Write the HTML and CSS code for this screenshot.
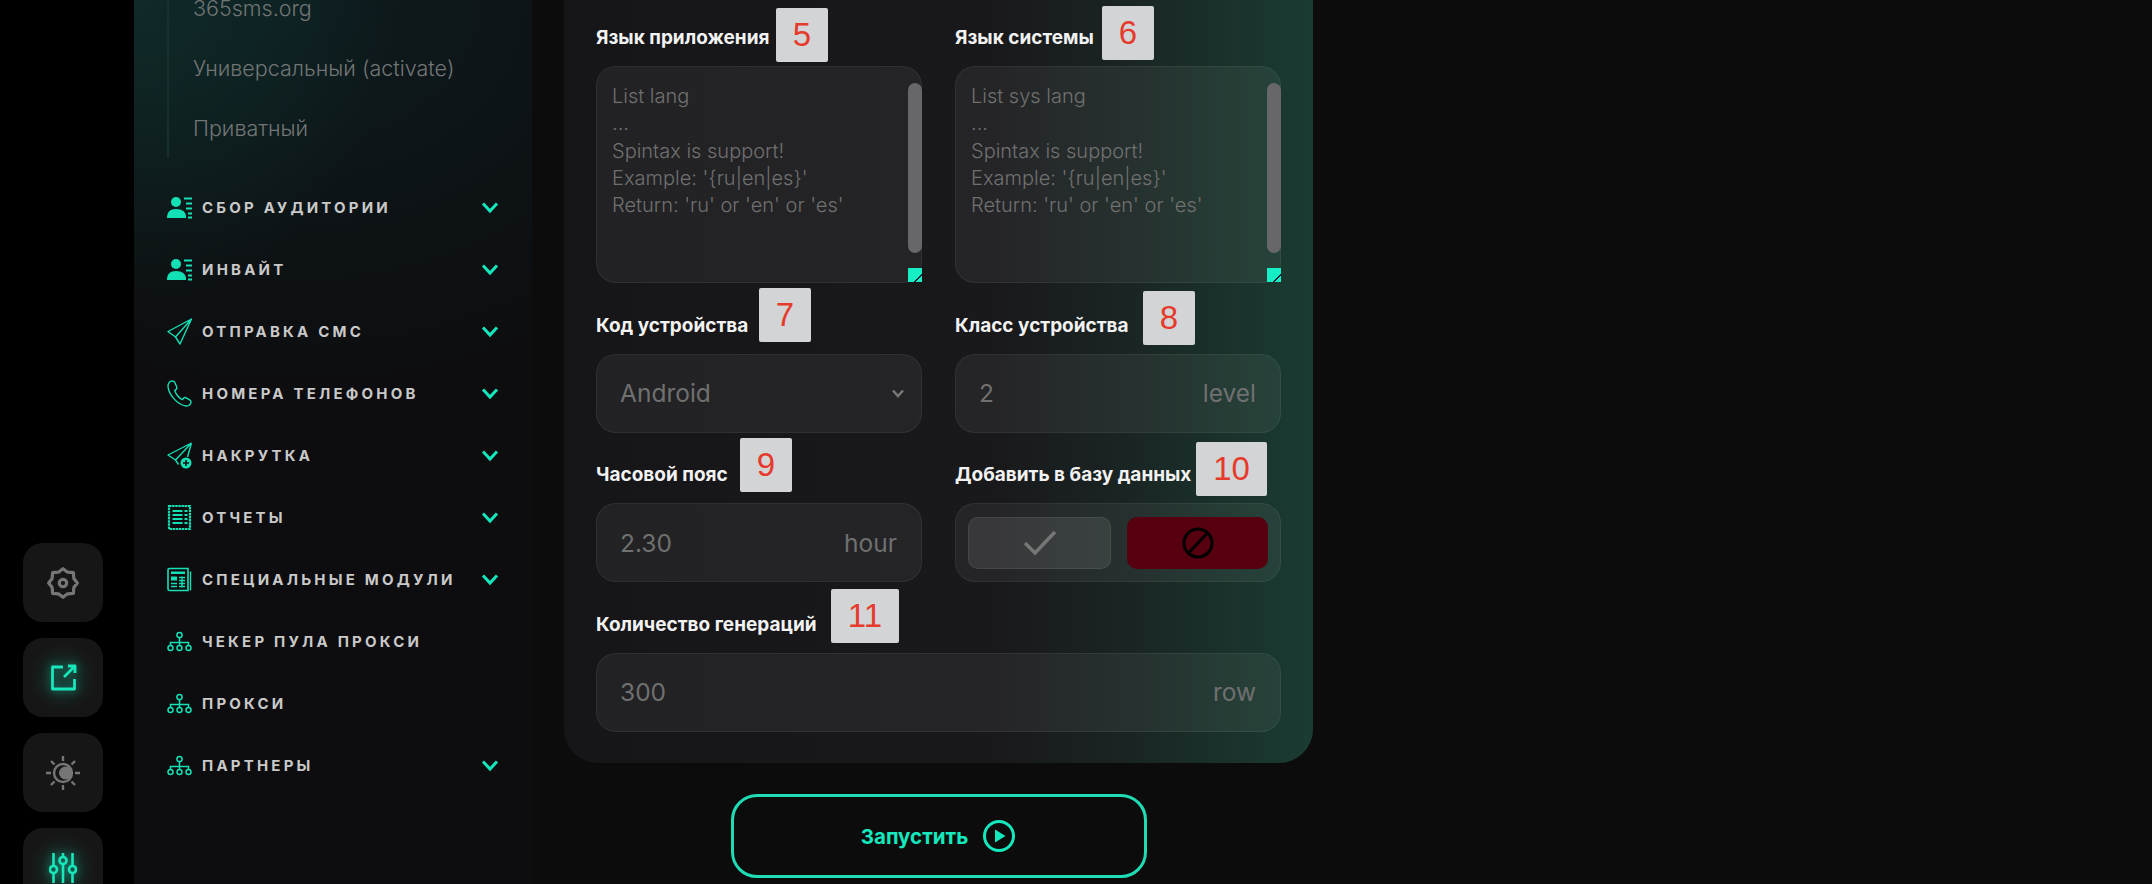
FILE: index.html
```html
<!DOCTYPE html>
<html lang="ru">
<head>
  <meta charset="UTF-8" />
  <meta name="viewport" content="width=device-width, initial-scale=1.0"/>
  <title>Генерация устройств</title>
  <link rel="stylesheet" href="styles.css">
</head>
<body>

  <svg class="defs" width="0" height="0">
    <symbol id="i-users" viewBox="0 0 25 22">
      <circle cx="9" cy="5.500" r="5" fill="currentColor"/>
      <path d="M0 21.500c0-6 3-9 9-9s10 3 10 7.500v1.500z" fill="currentColor"/>
      <path d="M17 2h8M19 7h6M19 12h6M21 17h4M21 21h4" stroke="currentColor" stroke-width="1.800" fill="none"/>
    </symbol>
    <symbol id="i-plane" viewBox="0 0 25 27">
      <path d="M24.500 1 1 13.500l7.500 5.500L13 26zM24.500 1 8.500 19" fill="none" stroke="currentColor" stroke-width="1.400" stroke-linejoin="round"/>
    </symbol>
    <symbol id="i-phone" viewBox="0 0 25 27">
      <path d="M5.500 1C2.500 1 .8 3.500 1 6.500c.6 8 9.500 18.500 18 19.500 2.500.3 5-1.500 5-4 0-1-.5-1.600-1.300-2.100l-3.500-2c-1-.6-2-.4-2.700.4l-1.200 1.300c-3-1-6.500-5.500-7.500-9l1.400-1.200c.8-.7.900-1.700.5-2.600L7.700 2.300C7.300 1.400 6.500 1 5.500 1z" fill="none" stroke="currentColor" stroke-width="1.400"/>
    </symbol>
    <symbol id="i-boost" viewBox="0 0 25 27">
      <path d="M24.500 1 1 13l7.500 5 3 4.500M24.500 1l-4 14M24.500 1 8.500 18" fill="none" stroke="currentColor" stroke-width="1.400" stroke-linejoin="round"/>
      <circle cx="19" cy="21" r="5.500" fill="currentColor"/>
      <path d="M19 18v6M16 21h6" stroke="#0d1012" stroke-width="1.600"/>
    </symbol>
    <symbol id="i-report" viewBox="0 0 25 27">
      <path d="M2 2h21v23H2z" fill="none" stroke="currentColor" stroke-width="2.200" stroke-dasharray="2.500 .6"/>
      <path d="M5.500 7h10M5.500 11h10M5.500 15h10M5.500 19h10" stroke="currentColor" stroke-width="2"/>
      <path d="M17.500 7h3M17.500 11h3M17.500 15h3M17.500 19h3" stroke="currentColor" stroke-width="2"/>
    </symbol>
    <symbol id="i-table" viewBox="0 0 25 24">
      <path d="M1 2.500C1 1.500 1.500 1 2.500 1H21v22H2.500c-1 0-1.500-.5-1.500-1.500z" fill="none" stroke="currentColor" stroke-width="1.600"/>
      <path d="M23.500 4v19" stroke="currentColor" stroke-width="1.400"/>
      <path d="M4 4h14v2.500H4z" fill="currentColor"/>
      <path d="M4 9h6v4H4z" fill="currentColor"/>
      <path d="M12 10h6M12 13h6M12 16h6M12 19h6M4 16h6M4 19h6M15 9v11" stroke="currentColor" stroke-width="1.300"/>
    </symbol>
    <symbol id="i-tree" viewBox="0 0 25 20">
      <circle cx="12.500" cy="3.500" r="2.600" fill="none" stroke="currentColor" stroke-width="1.500"/>
      <path d="M12.500 6v5M3.500 14v-3h18v3M12.500 11v3" fill="none" stroke="currentColor" stroke-width="1.500"/>
      <circle cx="3.500" cy="16.500" r="2.500" fill="none" stroke="currentColor" stroke-width="1.500"/>
      <circle cx="12.500" cy="16.500" r="2.500" fill="none" stroke="currentColor" stroke-width="1.500"/>
      <circle cx="21.500" cy="16.500" r="2.500" fill="none" stroke="currentColor" stroke-width="1.500"/>
    </symbol>
    <symbol id="i-chevron" viewBox="0 0 18 13">
      <path d="M2 2.500 9 10l7-7.500" fill="none" stroke="currentColor" stroke-width="3"/>
    </symbol>
  </svg>

  <aside class="rail">
    <div class="rail-btn">
      <svg width="34" height="34" viewBox="0 0 32 32" fill="none" stroke="currentColor" stroke-width="3" stroke-linejoin="round">
        <path d="M29.500 16 26.200 20.300 25.800 25.800 20.300 26.200 16 29.500 11.700 26.200 6.200 25.800 5.800 20.300 2.500 16 5.800 11.700 6.200 6.200 11.700 5.800 16 2.500 20.300 5.800 25.800 6.200 26.200 11.700z"/>
        <circle cx="16" cy="16" r="3.500"/>
      </svg>
    </div>
    <div class="rail-btn on">
      <svg width="27" height="27" viewBox="0 0 27 27" fill="none" stroke="currentColor" stroke-width="2.800" stroke-linejoin="round">
        <path d="M13 3H2.500v22h22V15"/>
        <path d="M14 13 25 2M18 2h7v7"/>
      </svg>
    </div>
    <div class="rail-btn">
      <svg width="36" height="36" viewBox="0 0 36 36" fill="none" stroke="currentColor" stroke-width="2.400">
        <circle cx="18" cy="18" r="9"/>
        <circle cx="20.500" cy="18" r="6.500" fill="currentColor" stroke="none"/>
        <path d="M18 1v5M18 30v5M1 18h5M30 18h5M6 6l3.500 3.500M26.500 26.500 30 30M6 30l3.500-3.500M26.500 9.500 30 6"/>
      </svg>
    </div>
    <div class="rail-btn on">
      <svg width="28" height="31" viewBox="0 0 28 31" fill="none" stroke="currentColor" stroke-width="2.600">
        <path d="M4.500 1v12M4.500 22v9M14 1v3M14 13v18M23.500 1v12M23.500 22v9"/>
        <circle cx="4.500" cy="17.500" r="3.500"/>
        <circle cx="14" cy="8.500" r="3.500"/>
        <circle cx="23.500" cy="17.500" r="3.500"/>
      </svg>
    </div>
  </aside>

  <nav class="sidebar">
    <ul class="submenu">
      <li>365sms.org</li>
      <li>Универсальный (activate)</li>
      <li>Приватный</li>
    </ul>
    <ul class="menu">
      <li><svg class="ico"><use href="#i-users"/></svg><span>Сбор аудитории</span><svg class="chev"><use href="#i-chevron"/></svg></li>
      <li><svg class="ico"><use href="#i-users"/></svg><span>Инвайт</span><svg class="chev"><use href="#i-chevron"/></svg></li>
      <li><svg class="ico"><use href="#i-plane"/></svg><span>Отправка смс</span><svg class="chev"><use href="#i-chevron"/></svg></li>
      <li><svg class="ico"><use href="#i-phone"/></svg><span>Номера телефонов</span><svg class="chev"><use href="#i-chevron"/></svg></li>
      <li><svg class="ico"><use href="#i-boost"/></svg><span>Накрутка</span><svg class="chev"><use href="#i-chevron"/></svg></li>
      <li><svg class="ico"><use href="#i-report"/></svg><span>Отчеты</span><svg class="chev"><use href="#i-chevron"/></svg></li>
      <li><svg class="ico"><use href="#i-table"/></svg><span>Специальные модули</span><svg class="chev"><use href="#i-chevron"/></svg></li>
      <li><svg class="ico"><use href="#i-tree"/></svg><span>Чекер пула прокси</span></li>
      <li><svg class="ico"><use href="#i-tree"/></svg><span>Прокси</span></li>
      <li><svg class="ico"><use href="#i-tree"/></svg><span>Партнеры</span><svg class="chev"><use href="#i-chevron"/></svg></li>
    </ul>
  </nav>

  <main>
    <section class="panel">
      <div class="field">
        <label>Язык приложения</label>
        <div class="area">
          <p>List lang<br>...<br>Spintax is support!<br>Example: '{ru|en|es}'<br>Return: 'ru' or 'en' or 'es'</p>
          <i class="thumb"></i><i class="grip"></i>
        </div>
      </div>
      <div class="field">
        <label>Язык системы</label>
        <div class="area">
          <p>List sys lang<br>...<br>Spintax is support!<br>Example: '{ru|en|es}'<br>Return: 'ru' or 'en' or 'es'</p>
          <i class="thumb"></i><i class="grip"></i>
        </div>
      </div>
      <div class="field">
        <label>Код устройства</label>
        <div class="box">
          <span>Android</span>
          <svg class="caret" width="12" height="9" viewBox="0 0 12 9" fill="none" stroke="currentColor" stroke-width="2.600"><path d="M1 1.500 6 7l5-5.500"/></svg>
        </div>
      </div>
      <div class="field">
        <label>Класс устройства</label>
        <div class="box"><span>2</span><span>level</span></div>
      </div>
      <div class="field">
        <label>Часовой пояс</label>
        <div class="box"><span>2.30</span><span>hour</span></div>
      </div>
      <div class="field">
        <label>Добавить в базу данных</label>
        <div class="box toggle">
          <div class="yes">
            <svg width="34" height="26" viewBox="0 0 34 26" fill="none" stroke="currentColor" stroke-width="3.500"><path d="M2 13l10 10L32 2"/></svg>
          </div>
          <div class="no">
            <svg width="32" height="32" viewBox="0 0 32 32" fill="none" stroke="#000" stroke-width="3"><circle cx="16" cy="16" r="14"/><path d="M6.500 26 25.500 6"/></svg>
          </div>
        </div>
      </div>
      <div class="field wide">
        <label>Количество генераций</label>
        <div class="box"><span>300</span><span>row</span></div>
      </div>

      <b class="mark m5">5</b>
      <b class="mark m6">6</b>
      <b class="mark m7">7</b>
      <b class="mark m8">8</b>
      <b class="mark m9">9</b>
      <b class="mark m10">10</b>
      <b class="mark m11">11</b>
    </section>

    <button class="run">
      Запустить
      <svg width="34" height="34" viewBox="0 0 34 34"><circle cx="17" cy="17" r="14.500" fill="none" stroke="currentColor" stroke-width="3"/><path d="M13 10.500 23.500 17 13 23.500z" fill="currentColor"/></svg>
    </button>
  </main>

</body>
</html>
```

FILE: styles.css
```css
* { box-sizing: border-box; margin: 0; padding: 0; }
body {
  background-color: #0c0c0d;
  color: #c9c9c9;
  font-family: "Inter", "Noto Sans", sans-serif;
  display: flex;
  height: 884px;
  overflow: hidden;
}
.defs { position: absolute; }

/* left rail */
.rail {
  width: 134px;
  flex: none;
  background-color: #000;
  padding: 543px 0 0 23px;
  display: flex;
  flex-direction: column;
  gap: 16px;
}
.rail-btn {
  width: 80px;
  height: 79px;
  flex: none;
  border-radius: 20px;
  background-color: #161616;
  color: #767676;
  display: flex;
  align-items: center;
  justify-content: center;
}
.rail-btn.on {
  color: #18e6bb;
  background-image: radial-gradient(circle at center, rgba(24,230,187,0.14), rgba(24,230,187,0) 60%);
}
.rail-btn.on svg { filter: drop-shadow(0 0 5px rgba(24,230,187,0.6)); }

/* sidebar */
.sidebar {
  width: 398px;
  flex: none;
  background-color: #0d0d0f;
  background-image:
    radial-gradient(ellipse 260px 300px at 0 0, rgba(20,80,70,0.35), rgba(20,80,70,0) 100%),
    radial-gradient(ellipse 520px 400px at 40% 0, rgba(14,44,48,0.45), rgba(14,44,48,0) 100%);
}
.submenu {
  list-style: none;
  margin: -22px 0 18px 33px;
  padding-left: 24px;
  border-left: 2px solid #16302e;
}
.submenu li {
  height: 60px;
  line-height: 60px;
  font-size: 21.500px;
  font-weight: 300;
  color: #727575;
}
.menu { list-style: none; }
.menu li {
  height: 62px;
  padding: 0 33px;
  display: flex;
  align-items: center;
  gap: 10px;
  font-size: 15px;
  font-weight: 700;
  letter-spacing: 3.200px;
  text-transform: uppercase;
}
.menu span { flex: 1; white-space: nowrap; }
.ico { width: 25px; height: 27px; flex: none; color: #14e0b6; }
.chev { width: 18px; height: 13px; flex: none; color: #14e8bd; }

/* main area */
main {
  flex: none;
  width: 749px;
  margin-left: 32px;
  display: flex;
  flex-direction: column;
  align-items: center;
}
.panel {
  position: relative;
  width: 100%;
  height: 763px;
  padding: 26px 32px 0;
  border-radius: 0 0 34px 34px;
  background-image: linear-gradient(90deg, #161618 0%, #19191b 58%, #1a2422 74%, #1a3c32 100%);
  display: grid;
  grid-template-columns: 326px 326px;
  column-gap: 33px;
  row-gap: 30.500px;
  align-content: start;
}
.field.wide { grid-column: 1 / 3; }
.field label {
  display: block;
  height: 24px;
  line-height: 24px;
  margin-bottom: 16px;
  font-size: 19px;
  font-weight: 700;
  color: #f2f2f2;
  white-space: nowrap;
}
.area, .box {
  border: 1px solid rgba(255,255,255,0.06);
  background-color: rgba(255,255,255,0.055);
  color: #707070;
}
.area {
  position: relative;
  height: 217px;
  border-radius: 20px;
  padding: 16px 15px;
  font-size: 20px;
  font-weight: 300;
  line-height: 27.300px;
}
.thumb {
  position: absolute;
  right: -1px;
  top: 16px;
  width: 14px;
  height: 170px;
  border-radius: 7px;
  background-color: #67676a;
}
.grip {
  position: absolute;
  right: -1px;
  bottom: 0;
  width: 14px;
  height: 14px;
  background-color: #16eec6;
  background-image: linear-gradient(135deg, rgba(0,0,0,0) 68%, #123 68%, #123 76%, rgba(0,0,0,0) 76%);
}
.box {
  height: 79px;
  border-radius: 20px;
  padding: 0 24px 0 23px;
  display: flex;
  align-items: center;
  justify-content: space-between;
  font-size: 24.500px;
  font-weight: 400;
}
.box svg { color: #767676; }
.box .caret { margin-right: -7px; }
.box.toggle { padding: 0 12px; gap: 16px; }
.toggle div {
  flex: 1;
  height: 52px;
  border-radius: 10px;
  display: flex;
  align-items: center;
  justify-content: center;
}
.toggle .yes {
  background-color: rgba(255,255,255,0.09);
  border: 1px solid rgba(255,255,255,0.07);
}
.toggle .no { background-color: #560010; }

/* numbered marks put over the screenshot */
.mark {
  position: absolute;
  height: 54px;
  width: 52px;
  border-radius: 2px;
  background-color: #d3d4d5;
  color: #e53a2c;
  font-family: "Liberation Sans", Arial, sans-serif;
  font-size: 33px;
  font-weight: 400;
  display: flex;
  align-items: center;
  justify-content: center;
}
.m5 { left: 212px; top: 8px; }
.m6 { left: 538px; top: 6px; }
.m7 { left: 195px; top: 288px; }
.m8 { left: 579px; top: 291px; }
.m9 { left: 176px; top: 438px; }
.m10 { left: 632px; top: 442px; width: 71px; }
.m11 { left: 267px; top: 589px; width: 68px; }

.run {
  margin-top: 31px;
  width: 416px;
  height: 84px;
  flex: none;
  border: 3px solid #1fdcb5;
  border-radius: 26px;
  background: none;
  color: #14e8bd;
  font-family: inherit;
  font-size: 20.500px;
  font-weight: 700;
  display: flex;
  align-items: center;
  justify-content: center;
  gap: 14px;
}
```
